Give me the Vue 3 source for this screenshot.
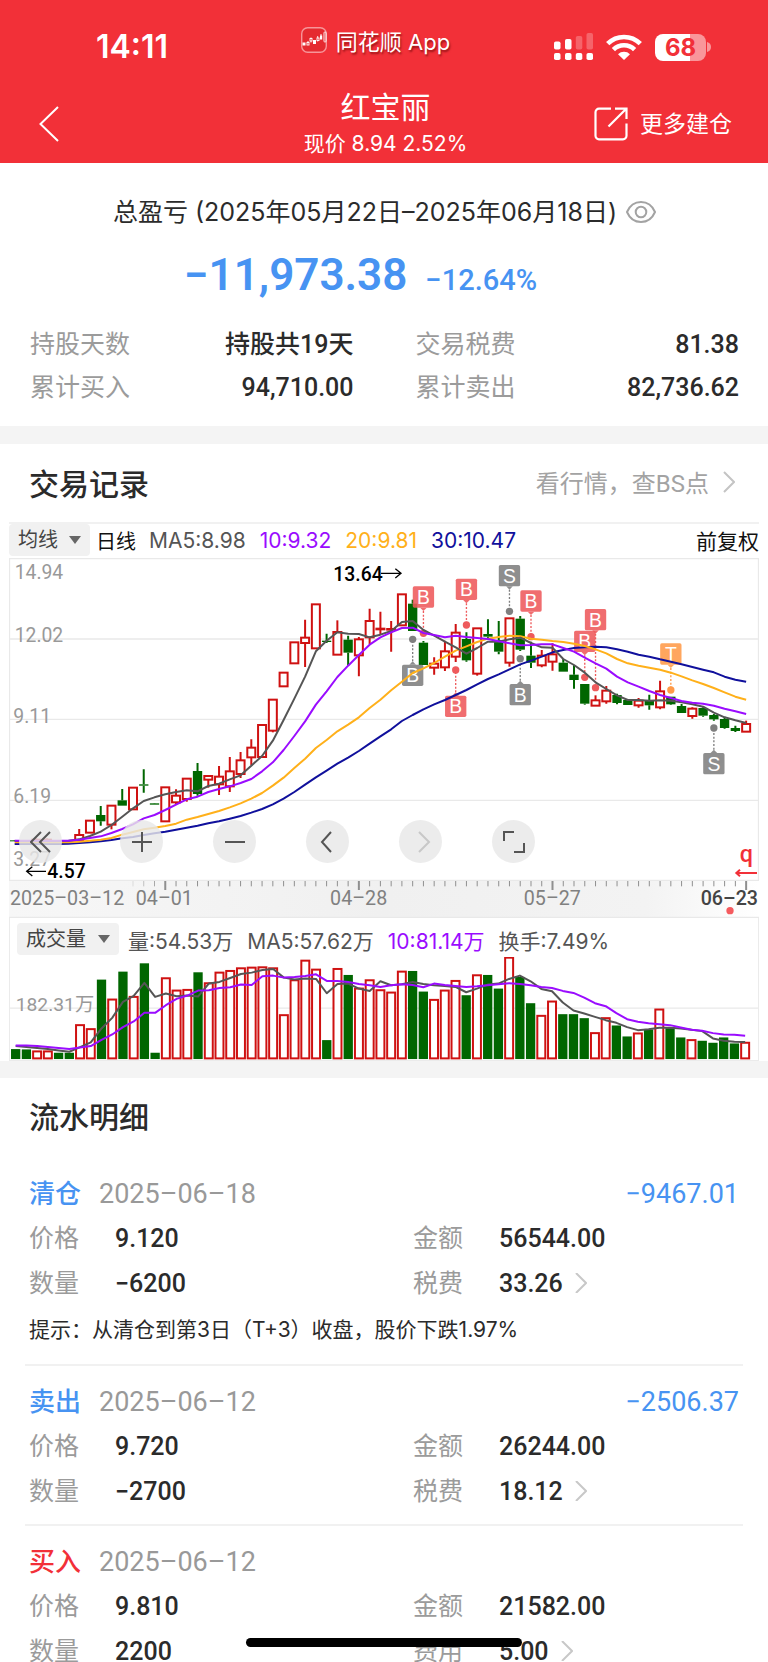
<script setup>
const X0 = 44
const STEP = 32.27
const xAt = (i) => Math.round((X0 + i * STEP) * 10) / 10
const toPoints = (ys) => ys.map((y, i) => `${xAt(i)},${y}`).join(' ')

// each candle: direction, high, body top, body bottom, low (chart units)
const candles = [
  ['d', 977, 976, 979, 979], ['d', 977, 976, 979, 979], ['u', 970, 974, 978, 978], ['u', 970, 974, 978, 978],
  ['d', 977, 976, 979, 979], ['d', 977, 976, 979, 979], ['u', 942, 960, 977, 977], ['u', 917, 917, 953, 953],
  ['d', 873, 900, 919, 932], ['u', 872, 872, 929, 943], ['d', 822, 856, 872, 872], ['u', 818, 818, 883, 883],
  ['d', 763, 808, 812, 833], ['d', 866, 865, 869, 869], ['u', 817, 817, 919, 919], ['u', 823, 842, 862, 870],
  ['u', 791, 791, 852, 860], ['d', 744, 768, 837, 842], ['u', 783, 783, 794, 818], ['u', 753, 785, 808, 840],
  ['u', 726, 769, 814, 831], ['u', 711, 736, 777, 789], ['u', 673, 698, 727, 750], ['u', 630, 630, 726, 726],
  ['u', 554, 554, 647, 652], ['u', 473, 473, 514, 514], ['u', 382, 382, 445, 445], ['u', 314, 368, 384, 456],
  ['u', 268, 268, 400, 400], ['d', 356, 377, 381, 384], ['u', 316, 351, 419, 419], ['d', 362, 374, 413, 452],
  ['u', 366, 373, 421, 484], ['u', 281, 318, 367, 388], ['u', 290, 341, 343, 360], ['u', 318, 342, 344, 410],
  ['u', 238, 238, 331, 331], ['d', 254, 266, 348, 348], ['d', 378, 383, 450, 450], ['u', 427, 446, 458, 479],
  ['u', 377, 409, 457, 468], ['u', 327, 353, 425, 441], ['d', 352, 372, 436, 440], ['u', 340, 340, 476, 482],
  ['d', 313, 357, 365, 370], ['d', 318, 375, 410, 418], ['u', 310, 310, 443, 455], ['d', 303, 311, 404, 408],
  ['d', 380, 422, 443, 459], ['u', 405, 422, 451, 457], ['u', 385, 418, 440, 467], ['d', 432, 443, 470, 470],
  ['d', 450, 479, 495, 521], ['d', 507, 507, 566, 569], ['u', 541, 556, 572, 572], ['u', 513, 527, 559, 566],
  ['d', 536, 540, 564, 568], ['d', 555, 555, 570, 570], ['u', 549, 557, 571, 578], ['d', 539, 555, 571, 584],
  ['u', 497, 529, 577, 583], ['d', 545, 545, 568, 570], ['d', 567, 573, 594, 594], ['u', 577, 581, 603, 611],
  ['d', 577, 579, 602, 605], ['d', 597, 600, 613, 617], ['d', 605, 612, 639, 641], ['d', 632, 639, 648, 651],
  ['u', 617, 627, 650, 650],
]
const priceLines = [
  { color: '#10109c', ys: [987, 987, 987, 987, 987, 986, 984, 982, 979, 975, 970, 966, 960, 955, 950, 944, 938, 932, 925, 919, 911, 903, 893, 882, 868, 851, 831, 809, 787, 767, 746, 728, 708, 686, 664, 643, 618, 600, 583, 568, 555, 540, 525, 508, 492, 478, 463, 448, 437, 425, 412, 405, 399, 397, 395, 397, 403, 410, 419, 425, 433, 440, 448, 456, 464, 472, 485, 494, 500] },
  { color: '#ffb01a', ys: [982, 982, 982, 982, 982, 982, 980, 977, 974, 969, 959, 951, 943, 938, 933, 926, 914, 906, 897, 888, 877, 865, 851, 834, 812, 788, 759, 731, 699, 675, 649, 629, 607, 579, 554, 526, 500, 474, 460, 444, 425, 407, 394, 381, 371, 366, 362, 364, 371, 374, 378, 381, 386, 393, 403, 415, 432, 445, 452, 458, 464, 473, 484, 496, 507, 519, 532, 545, 554] },
  { color: '#555555', ys: [978, 978, 978, 978, 978, 977, 973, 963, 950, 930, 905, 880, 858, 847, 838, 831, 826, 829, 813, 806, 793, 781, 752, 723, 677, 615, 551, 485, 409, 377, 352, 356, 357, 367, 359, 348, 321, 318, 345, 362, 380, 397, 416, 399, 380, 380, 373, 368, 384, 397, 398, 432, 450, 473, 502, 522, 541, 555, 555, 557, 556, 557, 562, 568, 575, 593, 607, 616, 624] },
  { color: '#9a0cff', ys: [977, 977, 977, 977, 977, 977, 974, 969, 964, 954, 942, 928, 910, 900, 885, 869, 853, 845, 831, 822, 814, 804, 792, 769, 742, 705, 663, 619, 569, 529, 486, 452, 420, 389, 367, 352, 339, 338, 354, 360, 367, 362, 366, 369, 372, 379, 385, 391, 390, 388, 388, 399, 410, 428, 445, 461, 485, 502, 515, 528, 540, 549, 558, 563, 566, 572, 581, 589, 597] },
]
const RED = '#ee5a5c'
const GRAY = '#7f7f7f'
const ORANGE = '#ff9a48'
const markers = [
  { i: 37, top: 449, dot: 373, t: 'B', c: GRAY }, { i: 38, top: 214, dot: 355, t: 'B', c: RED },
  { i: 41, top: 542, dot: 465, t: 'B', c: RED }, { i: 42, top: 191, dot: 330, t: 'B', c: RED },
  { i: 46, top: 150, dot: 289, t: 'S', c: GRAY }, { i: 47, top: 507, dot: 431, t: 'B', c: GRAY },
  { i: 48, top: 226, dot: 365, t: 'B', c: RED }, { i: 53, top: 347, dot: 487, t: 'B', c: RED },
  { i: 54, top: 282, dot: 518, t: 'B', c: RED }, { i: 61, top: 385, dot: 525, t: 'T', c: ORANGE },
  { i: 65, top: 714, dot: 639, t: 'S', c: GRAY },
].map((m) => {
  const x = xAt(m.i)
  const below = m.top > m.dot
  const edge = below ? m.top : m.top + 64
  const tip = below ? edge - 10 : edge + 10
  return { ...m, x, edge, tip, wedge: `${x - 10},${edge} ${x + 10},${edge} ${x},${tip}` }
})
const majors = [14, 32, 50, 68]
const ticks = Array.from({ length: 58 }, (_, k) => k + 11)
const priceLabels = [[44, 192, '14.94'], [44, 381, '12.02'], [40, 623, '9.11'], [40, 864, '6.19'], [40, 1052, '3.27']]

const volumes = [
  ['d', 404], ['d', 405], ['u', 411], ['u', 411], ['d', 415], ['d', 415], ['u', 332], ['u', 344], ['d', 195], ['u', 255],
  ['d', 171], ['u', 247], ['d', 146], ['d', 415], ['u', 191], ['u', 228], ['u', 226], ['d', 173], ['u', 206], ['u', 174],
  ['u', 169], ['u', 161], ['u', 159], ['u', 158], ['u', 161], ['u', 302], ['u', 197], ['u', 138], ['u', 165], ['d', 377],
  ['u', 163], ['d', 181], ['u', 222], ['u', 197], ['u', 227], ['u', 234], ['u', 171], ['d', 169], ['d', 231], ['u', 256],
  ['u', 228], ['u', 199], ['d', 242], ['u', 182], ['d', 181], ['d', 222], ['u', 129], ['d', 187], ['d', 266], ['u', 304],
  ['u', 261], ['d', 299], ['d', 299], ['d', 311], ['u', 356], ['u', 311], ['d', 333], ['d', 366], ['u', 357], ['d', 345],
  ['u', 285], ['d', 341], ['d', 369], ['u', 377], ['d', 379], ['d', 385], ['d', 369], ['d', 387], ['u', 385],
]
const volumeLines = [
  { color: '#555555', ys: [395, 398, 401, 404, 408, 412, 398, 384, 342, 310, 262, 244, 205, 247, 237, 245, 243, 246, 207, 202, 190, 178, 174, 166, 163, 189, 195, 192, 193, 236, 208, 207, 222, 229, 200, 212, 209, 202, 208, 212, 214, 217, 233, 222, 210, 207, 193, 183, 200, 223, 230, 264, 288, 297, 307, 317, 325, 338, 347, 344, 340, 340, 342, 346, 350, 372, 379, 382, 383] },
  { color: '#9a0cff', ys: [393, 393, 395, 398, 401, 404, 399, 395, 376, 360, 338, 321, 295, 295, 272, 253, 243, 228, 227, 220, 218, 210, 211, 185, 183, 189, 187, 184, 179, 199, 199, 202, 208, 212, 217, 212, 209, 211, 218, 207, 211, 214, 217, 215, 212, 209, 206, 208, 212, 217, 220, 229, 235, 249, 266, 275, 296, 314, 322, 326, 329, 332, 339, 346, 349, 356, 360, 361, 364] },
]

const stats = [
  ['持股天数', '持股共19天', '交易税费', '81.38'],
  ['累计买入', '94,710.00', '累计卖出', '82,736.62'],
]
const records = [
  { type: '清仓', date: '2025–06–18', profit: '−9467.01', price: '9.120', amount: '56544.00', qty: '−6200', feeName: '税费', fee: '33.26', tip: '提示：从清仓到第3日（T+3）收盘，股价下跌1.97%' },
  { type: '卖出', date: '2025–06–12', profit: '−2506.37', price: '9.720', amount: '26244.00', qty: '−2700', feeName: '税费', fee: '18.12' },
  { type: '买入', buy: true, date: '2025–06–12', price: '9.810', amount: '21582.00', qty: '2200', feeName: '费用', fee: '5.00' },
]
</script>

<template>
  <div class="app">
    <header class="top">
      <div class="status">
        <span class="time">14:11</span>
        <span class="source">
          <svg width="26" height="26" viewBox="0 0 26 26" aria-hidden="true">
            <rect x="0.7" y="0.7" width="24.6" height="24.6" rx="6" fill="#e52a30" stroke="#f79599" stroke-width="1.4" />
            <g fill="#fff"><rect x="1.5" y="15.5" width="3" height="3" /><rect x="12" y="13" width="3" height="4" /><rect x="19" y="8.5" width="2.2" height="4" /></g>
            <g fill="none" stroke="#fff" stroke-width="0.9"><rect x="6" y="15.5" width="2" height="2.5" /><path d="M7 14v1.5M10 10.5v1M10 14v1.5M16.7 9v2M16.7 13.5v1M20 7v2" /><rect x="9" y="11.5" width="2" height="2.5" /><rect x="16" y="11" width="2" height="2.5" /><rect x="23" y="5" width="2" height="10" rx="0.8" /></g>
          </svg>
          同花顺 App
        </span>
        <span class="signals">
          <svg width="40" height="28" viewBox="0 0 40 28" aria-hidden="true">
            <g fill="#fff">
              <rect x="0" y="8.5" width="6.5" height="8" rx="1.8" /><rect x="11" y="6" width="6.5" height="10.5" rx="1.8" />
              <rect x="21.8" y="3" width="6.5" height="13.5" rx="1.8" opacity="0.25" /><rect x="32.5" y="0" width="6.5" height="16.5" rx="1.8" opacity="0.25" />
              <rect v-for="x in [0, 11, 21.8, 32.5]" :key="x" :x="x" y="20" width="6.5" height="7" rx="1.8" />
            </g>
          </svg>
          <svg class="wifi" width="36" height="26" viewBox="0 0 36 26" aria-hidden="true">
            <g fill="none" stroke="#fff" stroke-width="4.6"><path d="M1.7 9.7a23 23 0 0 1 32.6 0" /><path d="M7.4 15.7a15 15 0 0 1 21.2 0" /></g>
            <path d="M12 20.2a8.600 8.600 0 0 1 12 0L18 26z" fill="#fff" />
          </svg>
          <span class="battery">68</span>
          <svg class="cap" width="4" height="10" viewBox="0 0 4 10" aria-hidden="true"><path d="M0 0q4 1 4 5t-4 5z" fill="#f9969a" /></svg>
        </span>
      </div>
      <nav class="nav">
        <button class="back" aria-label="返回">
          <svg width="20" height="36" viewBox="0 0 20 36" aria-hidden="true"><path d="M19 1 1.5 18 19 35" fill="none" stroke="#fff" stroke-width="2" /></svg>
        </button>
        <div class="title">
          <h1>红宝丽</h1>
          <p>现价 8.94 2.52%</p>
        </div>
        <button class="more">
          <svg width="34" height="34" viewBox="0 0 34 34" fill="none" stroke="#fff" stroke-width="2.2" aria-hidden="true">
            <path d="M17 1.7H5a3.5 3.5 0 0 0-3.5 3.5v23.6A3.5 3.5 0 0 0 5 32.3h24a3.5 3.5 0 0 0 3.5-3.5V16.5" /><path d="M14.500 19.500 32 2M21 1.700h11.500V12" />
          </svg>
          更多建仓
        </button>
      </nav>
    </header>

    <section class="summary">
      <div class="period">
        总盈亏 (2025年05月22日–2025年06月18日)
        <button class="eye" aria-label="隐藏金额">
          <svg width="30" height="22" viewBox="0 0 30 22" fill="none" stroke="#a3a3a3" stroke-width="2" aria-hidden="true">
            <path d="M1 11C4 4 9 1 15 1s11 3 14 10c-3 7-8 10-14 10S4 18 1 11z" /><circle cx="15" cy="11" r="5.3" />
          </svg>
        </button>
      </div>
      <div class="profit"><strong>−11,973.38</strong><span>−12.64%</span></div>
      <dl v-for="r in stats" :key="r[0]" class="stat">
        <dt>{{ r[0] }}</dt><dd>{{ r[1] }}</dd><dt>{{ r[2] }}</dt><dd>{{ r[3] }}</dd>
      </dl>
    </section>

    <section class="trade">
      <div class="heading">
        <h2>交易记录</h2>
        <a href="#quotes">看行情，查BS点
          <svg width="12" height="22" viewBox="0 0 12 22" aria-hidden="true"><path d="M1 1l10 10L1 21" fill="none" stroke="#c4c4c4" stroke-width="2" /></svg>
        </a>
      </div>
      <div class="chart">
        <div class="toolbar">
          <span class="pick">
            <select class="pick-ma" aria-label="主图指标"><option>均线</option></select>
            <svg width="12" height="8" viewBox="0 0 12 8" aria-hidden="true"><path d="M0 0h12L6 8z" fill="#666" /></svg>
          </span>
          <span class="day">日线</span>
          <span class="ma">MA5:8.98</span>
          <span class="ma purple">10:9.32</span>
          <span class="ma orange">20:9.81</span>
          <span class="ma navy">30:10.47</span>
          <span class="right">前复权</span>
        </div>
        <div class="kline">
          <svg class="plot" viewBox="27 129 2250 1080" role="img" aria-label="日线K线图">
            <defs>
              <linearGradient id="axisShade" x1="0" x2="1" y1="0" y2="0"><stop offset="0" stop-color="#f7f7f7" /><stop offset="0.5" stop-color="#f0f0f0" /><stop offset="0.85" stop-color="#f3f3f3" /><stop offset="1" stop-color="#fff" /></linearGradient>
            </defs>
            <path d="M28.500 1208V130.500H2275.500V1208" fill="none" stroke="#e9e9e9" stroke-width="4" />
            <rect x="27" y="1095" width="2250" height="112" fill="url(#axisShade)" />
            <path d="M27 372H2277M27 613H2277M27 856H2277M27 1096H2277M27 1207H2277" stroke="#e9e9e9" stroke-width="4" />
            <text v-for="l in priceLabels" :key="l[2]" :x="l[0]" :y="l[1]" class="scale">{{ l[2] }}</text>

            <g v-for="(c, i) in candles" :key="i" :class="c[0] === 'u' ? 'rise' : 'fall'">
              <path :d="`M${xAt(i)} ${c[1]}V${c[2]}M${xAt(i)} ${c[3]}V${c[4]}`" />
              <rect v-if="c[0] === 'u'" :x="xAt(i) - 12" :y="c[2]" width="24" :height="c[3] - c[2]" />
              <rect v-else :x="xAt(i) - 14" :y="c[2]" width="28" :height="c[3] - c[2]" />
            </g>

            <g v-for="m in markers" :key="m.i">
              <path :d="`M${m.x} ${m.tip}V${m.dot}`" :stroke="m.c" stroke-width="4" stroke-dasharray="6 5" />
              <circle :cx="m.x" :cy="m.dot" r="11" :fill="m.c" />
              <g opacity="0.88">
                <rect :x="m.x - 32" :y="m.top" width="64" height="64" rx="5" :fill="m.c" />
                <polygon :points="m.wedge" :fill="m.c" />
              </g>
              <text :x="m.x" :y="m.top + 53" class="tag">{{ m.t }}</text>
            </g>
            <polyline v-for="l in priceLines" :key="l.color" :points="toPoints(l.ys)" :stroke="l.color" class="line" />

            <text x="1000" y="197" class="extreme">13.64</text>
            <path d="M1143 175H1202M1186 161l17 14-17 14" class="arrow" />
            <text x="142" y="1090" class="extreme">4.57</text>
            <path d="M138 1069H80M97 1055l-17 14 17 14" class="arrow" />
            <text x="2239" y="1041" class="quick">q</text>
            <path d="M2271 1074H2209M2220 1064l-11 10 11 10" class="arrow-red" />

            <path v-for="i in ticks" :key="i" :d="`M${xAt(i)} 1098v${majors.includes(i) ? 27 : 16}`" stroke="#8f8f8f" :stroke-width="majors.includes(i) ? 6 : 3" :opacity="i < 14 ? (i - 10) / 4 : 1" />
            <text x="30" y="1170" class="date">2025–03–12</text>
            <text x="493" y="1170" class="date mid">04–01</text>
            <text x="1076" y="1170" class="date mid">04–28</text>
            <text x="1657" y="1170" class="date mid">05–27</text>
            <text x="2274" y="1170" class="date last">06–23</text>
            <circle cx="2190" cy="1187" r="11" fill="#f55b5f" />
          </svg>
          <div class="controls">
            <button aria-label="快速后退"><svg width="22" height="22" viewBox="0 0 22 22"><path d="M11 1 1 11l10 10M20 1 10 11l10 10" /></svg></button>
            <button aria-label="放大"><svg width="22" height="22" viewBox="0 0 22 22"><path d="M1 11h20M11 1v20" /></svg></button>
            <button aria-label="缩小"><svg width="22" height="22" viewBox="0 0 22 22"><path d="M1 11h20" /></svg></button>
            <button aria-label="后退"><svg width="22" height="22" viewBox="0 0 22 22"><path d="M14 1 5 11l9 10" /></svg></button>
            <button aria-label="前进" disabled><svg width="22" height="22" viewBox="0 0 22 22"><path d="M9 1l10 10L9 21" /></svg></button>
            <button aria-label="全屏"><svg width="22" height="22" viewBox="0 0 22 22"><path d="M1 10V1h10M21 12v9h-10" /></svg></button>
          </div>
        </div>
        <div class="volume">
          <div class="volbar">
            <span class="pick">
              <select class="pick-vol" aria-label="副图指标"><option>成交量</option></select>
              <svg width="12" height="8" viewBox="0 0 12 8" aria-hidden="true"><path d="M0 0h12L6 8z" fill="#666" /></svg>
            </span>
            <span class="ma">量:54.53万</span>
            <span class="ma">MA5:57.62万</span>
            <span class="ma purple">10:81.14万</span>
            <span class="ma">换手:7.49%</span>
          </div>
          <svg class="plot" viewBox="27 127 2250 309" role="img" aria-label="成交量图">
            <path d="M27 281H2277" stroke="#e9e9e9" stroke-width="4" />
            <g v-for="(v, i) in volumes" :key="i" :class="v[0] === 'u' ? 'rise' : 'fall'">
              <rect v-if="v[0] === 'u'" :x="xAt(i) - 12" :y="v[1]" width="24" :height="432 - v[1]" />
              <rect v-else :x="xAt(i) - 14" :y="v[1]" width="28" :height="434 - v[1]" />
            </g>
            <polyline v-for="l in volumeLines" :key="l.color" :points="toPoints(l.ys)" :stroke="l.color" class="line" />
            <text x="44" y="290" class="scale">182.31万</text>
          </svg>
        </div>
      </div>
    </section>

    <section class="details">
      <h2>流水明细</h2>
      <article v-for="(r, k) in records" :key="k" class="record">
        <div class="rec-head">
          <h3 :class="{ buy: r.buy }">{{ r.type }}</h3>
          <time>{{ r.date }}</time>
          <span class="rec-profit">{{ r.profit }}</span>
        </div>
        <dl class="rec-row"><dt>价格</dt><dd>{{ r.price }}</dd><dt>金额</dt><dd>{{ r.amount }}</dd></dl>
        <dl class="rec-row">
          <dt>数量</dt><dd>{{ r.qty }}</dd><dt>{{ r.feeName }}</dt>
          <dd>{{ r.fee }}<svg width="12" height="20" viewBox="0 0 12 20" aria-hidden="true"><path d="M1 0l10 10L1 20" fill="none" stroke="#c8c8c8" stroke-width="2" /></svg></dd>
        </dl>
        <p v-if="r.tip" class="tip">{{ r.tip }}</p>
      </article>
    </section>
    <div class="home"></div>
  </div>
</template>

<style>
body { margin: 0; background: #fff; }
</style>

<style scoped>
.app { position: relative; height: 100vh; overflow: hidden; background: #fff; color: #2b2b2b; font-family: Roboto, "Noto Sans CJK SC", sans-serif; }
h1, h2, h3, p, dl, dd, dt { margin: 0; font-weight: 400; }
button { border: 0; padding: 0; background: none; color: inherit; font: inherit; }
svg { display: block; flex: none; }

.top { background: #f23038; color: #fff; padding-top: 22px; font-family: Inter, "Noto Sans CJK SC", sans-serif; }
.status { display: grid; grid-template-columns: 1fr auto 1fr; align-items: center; height: 42px; padding: 0 57px 0 40px; }
.time { padding: 4px 0 0 56px; font-size: 32px; line-height: 42px; font-weight: 600; }
.source { display: flex; align-items: center; gap: 9px; height: 30px; margin-bottom: 10px; font-size: 22px; text-shadow: 1px 2px 2px rgba(90, 0, 0, 0.6); }
.signals { display: flex; align-items: center; justify-content: flex-end; padding-top: 4px; }
.wifi { margin: 0 13px 0 12px; }
.battery { width: 51px; height: 27px; border-radius: 8px; background: linear-gradient(90deg, #fff 68%, #f9969a 68%); color: #f23038; font-size: 24px; line-height: 27px; font-weight: 700; text-align: center; }
.cap { margin-left: 1px; }
.nav { display: grid; grid-template-columns: 1fr auto 1fr; align-items: center; padding: 23px 36px 2px 39px; }
.back { justify-self: start; }
.title { text-align: center; }
.title h1 { font-size: 30px; line-height: 40px; }
.title p { font-size: 21px; line-height: 34px; }
.more { display: flex; align-items: center; gap: 12px; justify-self: end; font-size: 23px; line-height: 34px; }

.summary { padding: 31px 29px 17px 30px; border-bottom: 18px solid #f4f4f4; }
.period { display: flex; align-items: center; justify-content: center; gap: 9px; font-family: Inter, "Noto Sans CJK SC", sans-serif; font-size: 25px; line-height: 36px; }
.profit { display: flex; align-items: baseline; justify-content: center; gap: 18px; height: 56px; margin: 17px 48px 20px 0; color: #4793f2; font-weight: 500; }
.profit strong { font-size: 44px; line-height: 56px; font-weight: 600; }
.profit span { font-size: 29px; }
.stat { display: grid; grid-template-columns: 110px 1fr 172px 1fr; line-height: 43px; font-size: 25px; }
.stat dt { color: #9b9b9b; }
.stat dt:nth-of-type(2) { padding-left: 62px; }
.stat dd { text-align: right; font-weight: 500; white-space: nowrap; }

.heading { display: flex; align-items: center; justify-content: space-between; height: 75px; padding: 0 33px 3px 29px; }
h2 { font-size: 30px; font-weight: 500; }
.heading a { display: flex; align-items: center; gap: 14px; color: #a3a3a3; font-size: 24px; text-decoration: none; }
.chart { padding: 0 9px; font-family: Inter, "Noto Sans CJK SC", sans-serif; }
.toolbar { display: flex; align-items: center; height: 34px; border-top: 2px solid #f1f1f1; font-size: 21px; white-space: nowrap; }
.toolbar > span { margin-bottom: 2px; }
.pick { position: relative; display: flex; align-items: center; }
.pick svg { position: absolute; right: 9px; pointer-events: none; }
.pick select { appearance: none; height: 32px; margin: 0; border: 0; border-radius: 4px; padding: 0 0 0 9px; background: #f1f1f1; color: #444; font: inherit; font-size: 20px; }
.pick-ma { width: 81px; }
.pick-vol { width: 102px; }
.day { margin: 0 13px 0 6px; color: #111; font-size: 20px; }
.ma { margin-right: 14px; color: #555; }
.purple { color: #9a0cff; }
.orange { color: #ffb01a; }
.navy { color: #10109c; }
.right { margin-left: auto; color: #111; }
.kline { position: relative; }
.plot { width: 100%; height: auto; font-family: Roboto, "Noto Sans CJK SC", sans-serif; }
.scale { font-size: 58px; fill: #999; }
.rise { fill: #fff; stroke: #cf1111; stroke-width: 6; }
.fall { fill: #006600; }
.fall path { stroke: #006600; stroke-width: 6; }
.line { fill: none; stroke-width: 6; stroke-linejoin: round; }
.tag { fill: #fff; font-family: "Liberation Sans", sans-serif; font-size: 58px; text-anchor: middle; }
.extreme { font-size: 58px; font-weight: 500; fill: #000; }
.arrow { fill: none; stroke: #000; stroke-width: 4; }
.arrow-red { fill: none; stroke: #f23038; stroke-width: 6; }
.quick { font-size: 70px; font-weight: 500; fill: #f23038; text-anchor: middle; }
.date { font-size: 59px; fill: #808080; }
.mid { text-anchor: middle; }
.last { text-anchor: end; fill: #444; font-weight: 500; }
.controls { position: absolute; left: 10px; top: 262px; display: flex; gap: 50px; }
.controls button { display: grid; place-items: center; width: 43px; height: 43px; border-radius: 50%; background: rgba(232, 232, 232, 0.82); }
.controls button:first-child { margin-right: 8px; }
.controls path { fill: none; stroke: #555; stroke-width: 2; }
.controls button:disabled path { stroke: #c8c8c8; }
.volume { border: 1px solid #ebebeb; border-top: 0; }
.volbar { display: flex; align-items: center; height: 39px; padding-left: 7px; font-size: 21px; white-space: nowrap; }
.volbar .pick { margin: 3px 9px 0 0; }
.volbar .ma { padding-top: 4px; }

.details { border-top: 17px solid #f4f4f4; padding: 0 25px; }
.details h2 { padding-left: 4px; line-height: 80px; }
.record { padding: 14px 4px 10px; border-bottom: 2px solid #f1f1f1; }
.rec-head { display: flex; align-items: center; line-height: 44px; font-size: 27px; }
h3 { font-size: 26px; font-weight: 500; color: #4793f2; }
h3.buy { color: #f23038; }
time { margin-left: 18px; color: #999; }
.rec-profit { margin-left: auto; color: #4793f2; }
.rec-row { display: grid; grid-template-columns: 86px 298px 86px 1fr; line-height: 45px; font-size: 25px; }
.rec-row dt { color: #9b9b9b; }
.rec-row dd { display: flex; align-items: center; gap: 12px; font-weight: 500; }
.tip { font-family: Inter, "Noto Sans CJK SC", sans-serif; font-size: 21px; line-height: 48px; }
.home { position: absolute; left: 32%; right: 32%; bottom: 15px; height: 9px; border-radius: 5px; background: #000; }
</style>
